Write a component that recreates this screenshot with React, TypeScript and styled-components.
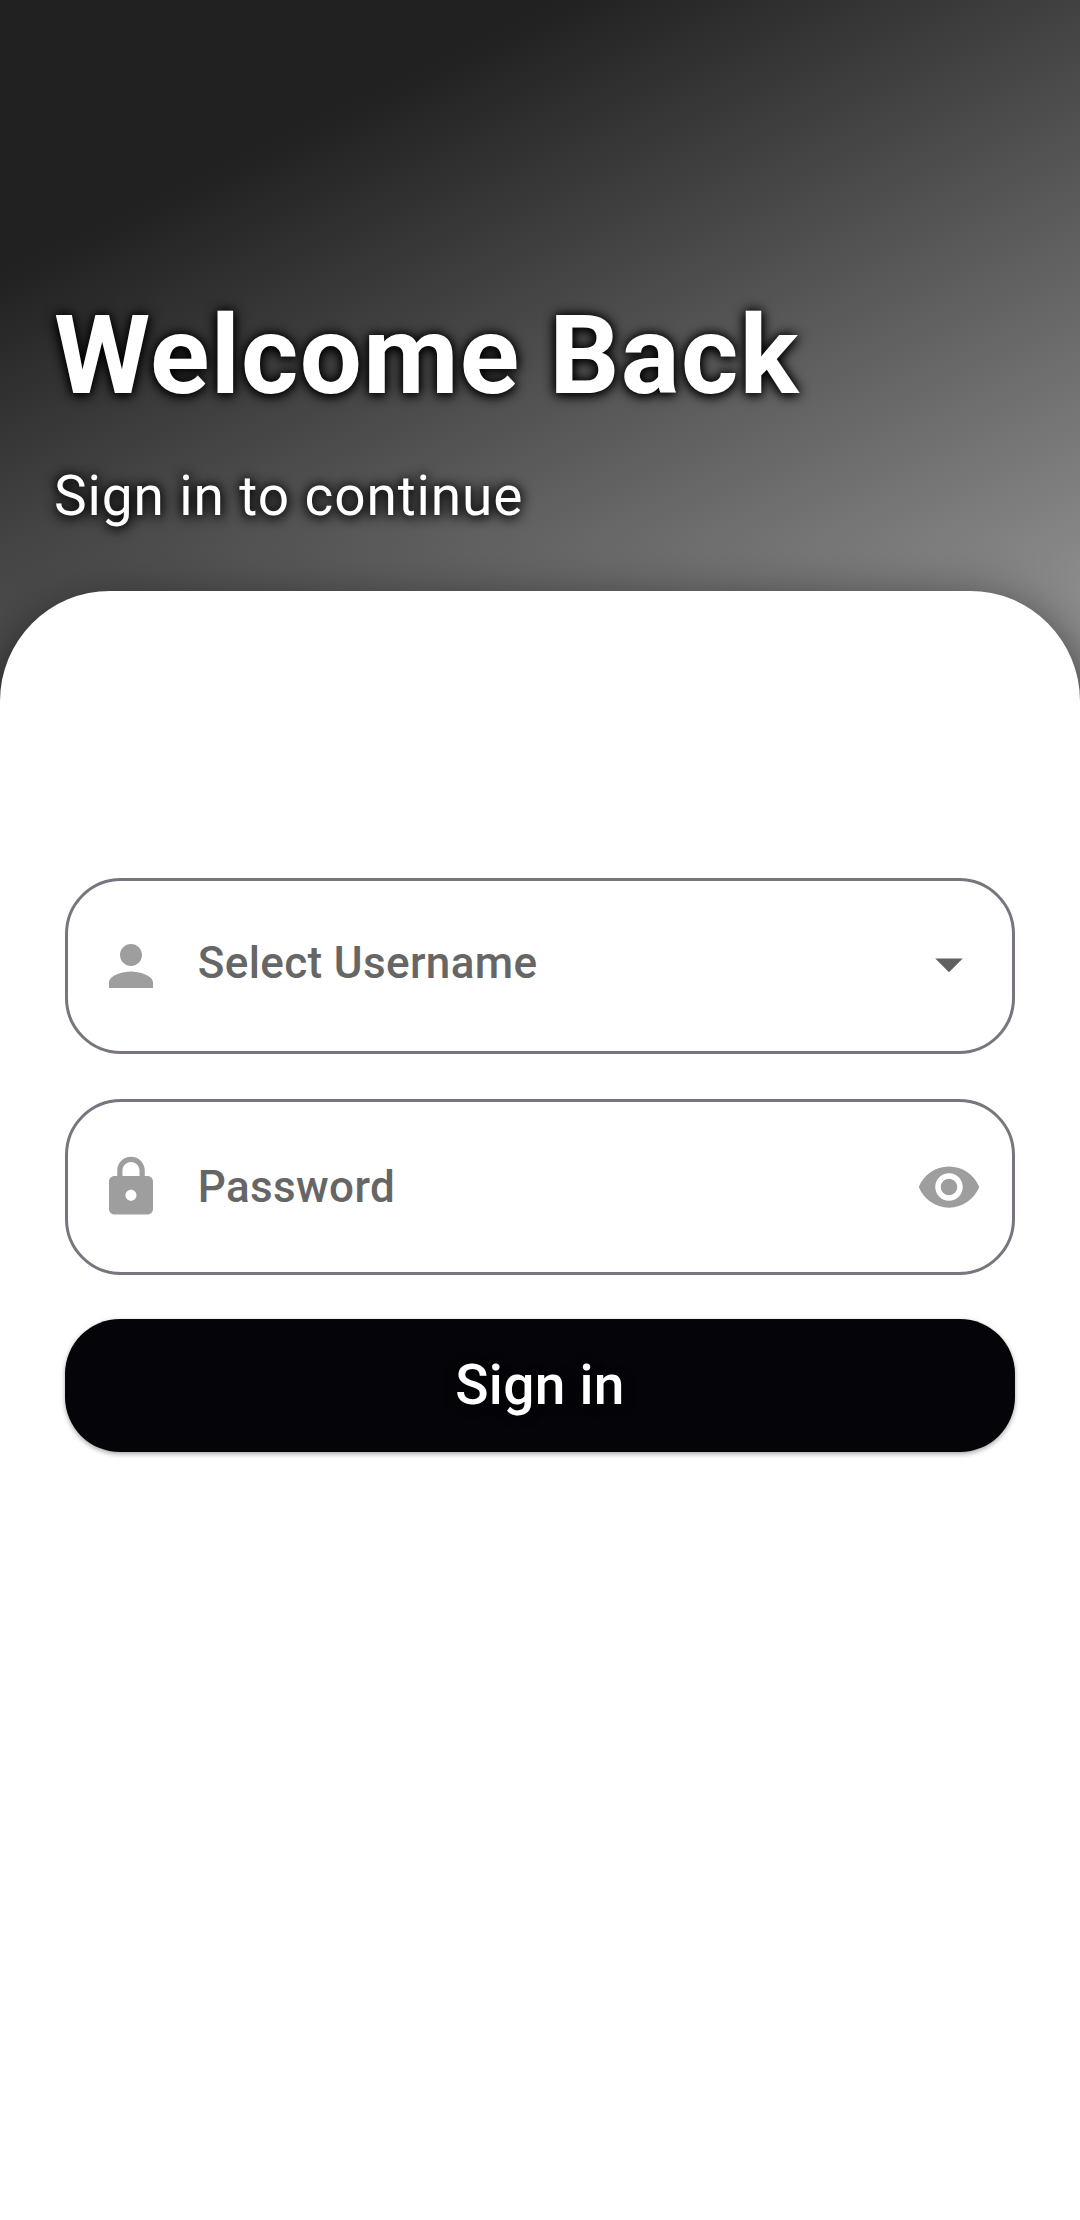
import React from "react";
import styled, { createGlobalStyle } from "styled-components";
import { MdPerson, MdLock, MdArrowDropDown, MdVisibility } from "react-icons/md";

const GlobalStyle = createGlobalStyle`
  *, *::before, *::after { box-sizing: border-box; }
  body { margin: 0; background: #ffffff; }
`;

const Screen = styled.main`
  width: 1080px;
  height: 2220px;
  display: flex;
  flex-direction: column;
  overflow: hidden;
  font-family: Roboto, "Noto Sans", sans-serif;
  background: linear-gradient(154.058deg, #212121 10%, #adadad 50%);
`;

const Header = styled.header`
  height: 591.3px;
  flex: none;
  display: flex;
  flex-direction: column;
  gap: 43px;
  padding: 291px 54px 0;
  color: #ffffff;
  text-shadow: 0 1px 13px #000000, 0 1px 11px #000000;
`;

const Title = styled.h1`
  margin: 0;
  font-size: 110px;
  line-height: 130px;
  font-weight: 700;
  letter-spacing: 1.34px;
  white-space: nowrap;
`;

const Subtitle = styled.p`
  margin: 0;
  font-size: 55px;
  line-height: 64px;
  font-weight: 400;
  letter-spacing: 0.88px;
`;

const Sheet = styled.section`
  flex: 1;
  padding: 287px 64.8px 0;
  background: #ffffff;
  border-radius: 110px 110px 0 0;
  box-shadow: 0 27.5px 66px #000000;
`;

const Form = styled.form`
  display: flex;
  flex-direction: column;
  gap: 44.4px;
`;

const Field = styled.div`
  height: 176px;
  display: flex;
  align-items: center;
  padding: 0 30px;
  border: 3px solid #79747e;
  border-radius: 56px;
  color: #9e9e9e;

  svg {
    width: 66px;
    height: 66px;
    flex: none;
  }
`;

const Label = styled.span<{ $lift?: number }>`
  flex: 1;
  padding-left: 34px;
  padding-bottom: ${(p) => p.$lift ?? 0}px;
  font-size: 44px;
  line-height: 52px;
  font-weight: 500;
  letter-spacing: 0.36px;
  color: #666666;
`;

const Trailing = styled.span<{ $color: string; $lift?: number }>`
  display: flex;
  padding-bottom: ${(p) => p.$lift ?? 0}px;
  color: ${(p) => p.$color};
`;

const SubmitButton = styled.button`
  height: 133px;
  border: 0;
  padding: 0 0 1px;
  border-radius: 55px;
  background: #050409;
  color: #ffffff;
  font: 500 55px/64px Roboto, "Noto Sans", sans-serif;
  letter-spacing: 0.3px;
  text-shadow: 0 1px 12px #000000;
  box-shadow: 0 2px 5px rgba(0, 0, 0, 0.35);
`;

export default function App() {
  return (
    <>
      <GlobalStyle />
      <Screen>
        <Header>
          <Title>Welcome Back</Title>
          <Subtitle>Sign in to continue</Subtitle>
        </Header>
        <Sheet>
          <Form>
            <Field>
              <MdPerson />
              <Label $lift={7}>Select Username</Label>
              <Trailing $color="#616161" $lift={4}>
                <MdArrowDropDown />
              </Trailing>
            </Field>
            <Field>
              <MdLock />
              <Label>Password</Label>
              <Trailing $color="#9e9e9e">
                <MdVisibility />
              </Trailing>
            </Field>
            <SubmitButton type="button">Sign in</SubmitButton>
          </Form>
        </Sheet>
      </Screen>
    </>
  );
}
